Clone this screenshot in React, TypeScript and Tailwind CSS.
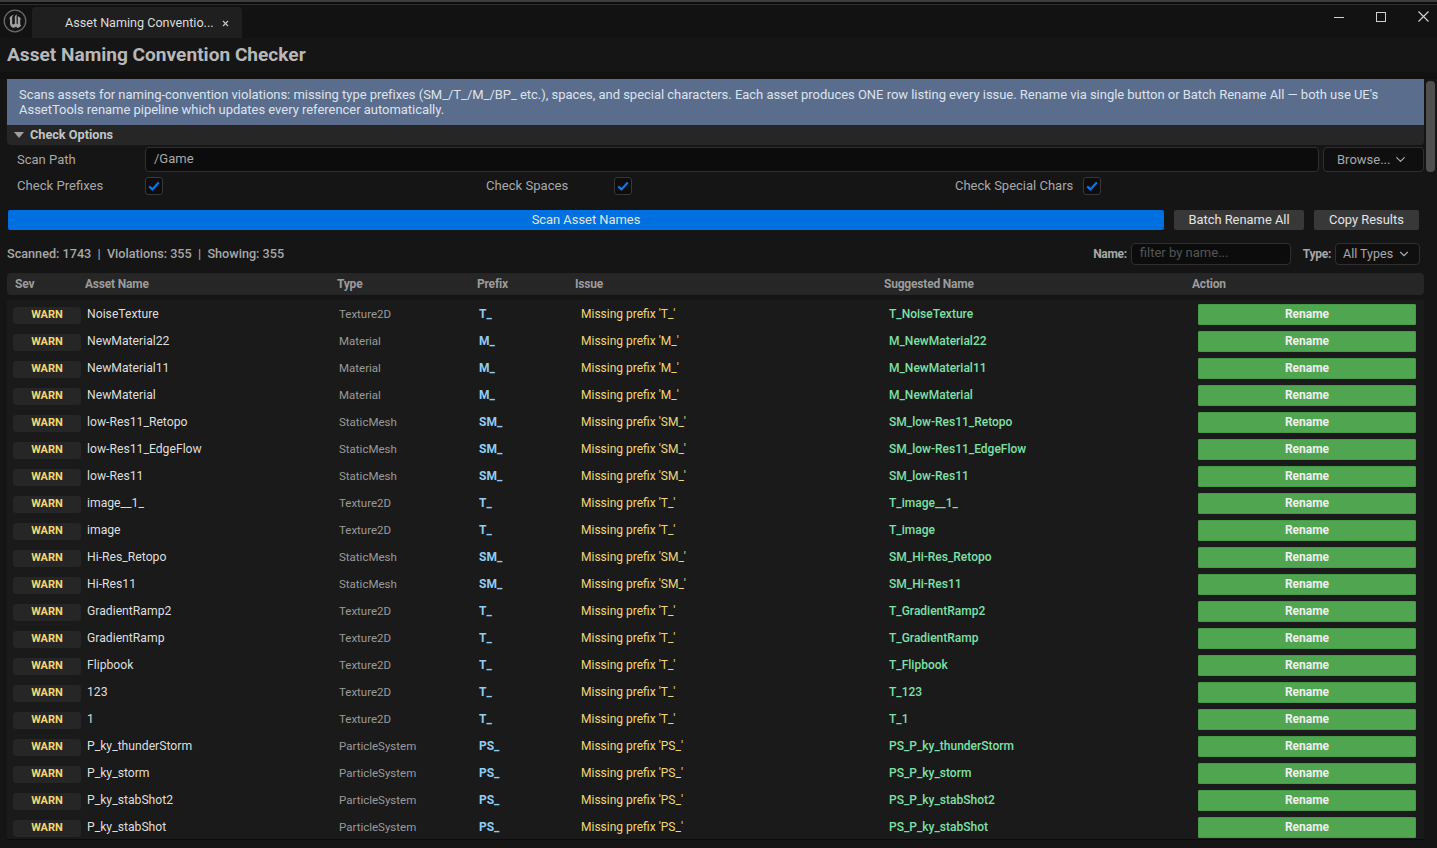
import React from "react";
import { ChevronDown, X } from "lucide-react";

const rows: [string, string, string][] = [
  ["NoiseTexture", "Texture2D", "T_"],
  ["NewMaterial22", "Material", "M_"],
  ["NewMaterial11", "Material", "M_"],
  ["NewMaterial", "Material", "M_"],
  ["low-Res11_Retopo", "StaticMesh", "SM_"],
  ["low-Res11_EdgeFlow", "StaticMesh", "SM_"],
  ["low-Res11", "StaticMesh", "SM_"],
  ["image__1_", "Texture2D", "T_"],
  ["image", "Texture2D", "T_"],
  ["Hi-Res_Retopo", "StaticMesh", "SM_"],
  ["Hi-Res11", "StaticMesh", "SM_"],
  ["GradientRamp2", "Texture2D", "T_"],
  ["GradientRamp", "Texture2D", "T_"],
  ["Flipbook", "Texture2D", "T_"],
  ["123", "Texture2D", "T_"],
  ["1", "Texture2D", "T_"],
  ["P_ky_thunderStorm", "ParticleSystem", "PS_"],
  ["P_ky_storm", "ParticleSystem", "PS_"],
  ["P_ky_stabShot2", "ParticleSystem", "PS_"],
  ["P_ky_stabShot", "ParticleSystem", "PS_"],
];

function Check() {
  return (
    <div className="w-[18px] h-[18px] rounded-[3px] border border-[#383838] bg-[#0d0d0d] flex items-center justify-center">
      <svg width="12" height="10" viewBox="0 0 12 10" fill="none">
        <path d="M1.2 5.4 L4.4 8.4 L10.8 1.4" stroke="#0a78e6" strokeWidth="2.2" />
      </svg>
    </div>
  );
}

function Logo() {
  return (
    <svg width="24" height="24" viewBox="0 0 24 24" fill="none">
      <circle cx="12" cy="12" r="10.8" stroke="#6a6a6a" strokeWidth="1.3" fill="#141414" />
      <path
        d="M5.8 10.5 C6.6 8 8.6 6.2 11.2 5.6 C9.8 6.6 9.2 7.6 9.2 8.8 L9.2 14.6 C9.2 15.8 10.6 15.9 11.8 14.8 L11.8 8 C11.8 7 12.6 6 14 5.2 C13.6 6.2 13.6 7 13.6 8 L13.6 14.6 L14.8 15.4 L14.8 7 C16.4 7.8 17.6 9 18.2 10.6 L17.2 10 L17.2 15.4 L18.2 16.4 C17 18 15.6 18.8 14.4 19 L13 17.4 C12 18.4 11 18.8 10.2 18.8 C8.4 18.2 7.2 16.8 7 15 L7 9.2 Z"
        fill="#a2a2a2"
      />
    </svg>
  );
}

export default function App() {
  return (
    <div className="w-[1437px] h-[848px] overflow-hidden flex flex-col bg-[#151515] font-['Roboto',sans-serif] text-[#c0c0c0]">
      <div className="h-[2px] bg-[#3d3d3d]" />
      <div className="h-[2px] bg-[#0c0c0c]" />
      <div className="h-[1px] bg-[#2e2e2e]" />
      <div className="h-[33px] flex bg-[#121212]">
        <div className="w-[32px] flex items-center pl-[3px] pb-[2px]">
          <Logo />
        </div>
        <div className="mt-[2px] w-[210px] rounded-t-[4px] bg-[#1f1f1f] flex items-center pl-[33px] pt-[1px] text-[12.6px] text-[#dcdcdc]">
          <span>Asset Naming Conventio...</span>
          <X size={9} strokeWidth={3} className="ml-[7px] text-[#c8c8c8]" />
        </div>
        <div className="flex-1" />
        <div className="flex items-start text-[#d0d0d0]">
          <svg width="10" height="1" viewBox="0 0 10 1" className="mt-[12px] mr-[32px]">
            <rect width="10" height="1" fill="currentColor" />
          </svg>
          <svg width="10" height="10" viewBox="0 0 10 10" fill="none" className="mt-[7px] mr-[32px]">
            <rect x="0.5" y="0.5" width="9" height="9" stroke="currentColor" />
          </svg>
          <svg width="11" height="11" viewBox="0 0 11 11" fill="none" className="mt-[6px] mr-[8px]">
            <path d="M0.5 0.5 L10.5 10.5 M10.5 0.5 L0.5 10.5" stroke="currentColor" strokeWidth="1.2" />
          </svg>
        </div>
      </div>
      <div className="h-[34px] bg-[#151515] pl-[7px] flex items-center text-[19.1px] font-bold text-[#b8b8b8]">
        Asset Naming Convention Checker
      </div>
      <div className="h-[7px] bg-[#111111]" />
      <div className="flex">
        <div className="ml-[7px] w-[1417px] flex flex-col">
          <div className="h-[46px] bg-[#5a6d8c] pl-[12px] pr-[20px] pt-[8px] text-[13px] tracking-[-0.03px] leading-[15px] text-[#dde3ee]">
            Scans assets for naming-convention violations: missing type prefixes (SM_/T_/M_/BP_ etc.), spaces, and special characters. Each asset produces ONE row listing every issue. Rename via single button or Batch Rename All — both use UE's AssetTools rename pipeline which updates every referencer automatically.
          </div>
          <div className="h-[20px] bg-[#262626] rounded-b-[4px] flex items-center pl-[7px] gap-[6px] text-[12.7px] font-bold text-[#c4c4c4]">
            <span className="w-0 h-0 border-l-[5px] border-r-[5px] border-t-[6px] border-l-transparent border-r-transparent border-t-[#a0a0a0]" />
            Check Options
          </div>
          <div className="h-[25px] mt-[2px] flex items-center text-[13px] pl-[10px]">
            <div className="w-[128px] text-[#a8a8a8]">Scan Path</div>
            <div className="w-[1174px] h-full rounded-[4px] border border-[#2f2f2f] bg-[#0c0c0c] pl-[8px] pb-[2px] flex items-center text-[#a8a8a8]">/Game</div>
            <div className="ml-[4px] w-[101px] h-full rounded-[4px] border border-[#2f2f2f] bg-[#0f0f0f] flex items-center pl-[13px] gap-[3px] text-[#a8a8a8]">
              Browse...
              <ChevronDown size={15} />
            </div>
          </div>
          <div className="h-[18px] mt-[5px] flex items-center text-[13.1px] pl-[10px] text-[#a8a8a8]">
            <div className="w-[128px]">Check Prefixes</div>
            <Check />
            <div className="w-[323px]" />
            <div className="w-[128px]">Check Spaces</div>
            <Check />
            <div className="w-[323px]" />
            <div className="w-[128px] whitespace-nowrap text-[13px]">Check Special Chars</div>
            <Check />
          </div>
          <div className="h-[20px] mt-[15px] flex text-[12.9px] text-[#e4e4e4]">
            <div className="ml-[1px] w-[1156px] rounded-[2px] bg-[#0070e0] flex items-center justify-center">Scan Asset Names</div>
            <div className="ml-[10px] w-[130px] rounded-[2px] bg-[#383838] flex items-center justify-center">Batch Rename All</div>
            <div className="ml-[10px] w-[105px] rounded-[2px] bg-[#383838] flex items-center justify-center">Copy Results</div>
          </div>
          <div className="h-[22px] mt-[13px] flex items-center text-[12.65px] font-medium text-[#a8a8a8]">
            <span className="whitespace-pre">Scanned: 1743  |  Violations: 355  |  Showing: 355</span>
            <div className="flex-1" />
            <span className="font-bold text-[12px] tracking-[-0.3px]">Name:</span>
            <div className="ml-[4px] w-[160px] h-full rounded-[4px] border border-[#2f2f2f] bg-[#0c0c0c] pl-[8px] pb-[2px] flex items-center text-[13px] font-normal text-[#555555]">filter by name...</div>
            <span className="ml-[12px] font-bold text-[12px] tracking-[-0.3px]">Type:</span>
            <div className="ml-[4px] w-[85px] h-full rounded-[4px] border border-[#2f2f2f] bg-[#0f0f0f] flex items-center pl-[7px] gap-[4px] text-[12.5px] font-normal">
              All Types
              <ChevronDown size={14} />
            </div>
            <div className="w-[4px]" />
          </div>
          <div className="mt-[8px] h-[22px] rounded-[4px] bg-[#262626] grid grid-cols-[70px_252px_140px_98px_309px_308px_240px] items-center pl-[8px] text-[12px] tracking-[-0.2px] font-bold text-[#9c9c9c]">
            <div>Sev</div>
            <div>Asset Name</div>
            <div>Type</div>
            <div>Prefix</div>
            <div>Issue</div>
            <div>Suggested Name</div>
            <div>Action</div>
          </div>
          <div className="mt-[5px] h-[540px] bg-[#1a1a1a] pl-[6px] pr-[8px] pt-[1px] overflow-hidden border-b border-b-[#0c0c0c]">
            {rows.map(([name, type, prefix]) => (
              <div key={name} className="h-[27px] grid grid-cols-[74px_252px_140px_102px_308px_309px_218px] items-center">
                <div className="mt-[2px] w-[68px] h-[17px] rounded-[3px] bg-[#262626] flex items-center justify-center text-[11px] font-bold text-[#f5d76e]">WARN</div>
                <div className="mb-[1px] text-[12.2px] text-[#dedede]">{name}</div>
                <div className="text-[11.5px] text-[#9a9a9a]">{type}</div>
                <div className="mb-[1px] text-[12px] font-bold text-[#90cdf4]">{prefix}</div>
                <div className="mb-[2px] text-[12px] text-[#f0d878]">Missing prefix '{prefix}'</div>
                <div className="mb-[2px] text-[12px] font-medium text-[#7fe0a8]">{prefix + name}</div>
                <div className="h-[21px] rounded-[1px] bg-[#50a650] border border-[#479a47] flex items-center justify-center pb-[2px] text-[12px] font-bold text-[#f0f0f0]">Rename</div>
              </div>
            ))}
          </div>
        </div>
        <div className="ml-[2px] mt-[2px] w-[9px] h-[91px] rounded-[4px] bg-[#4f4f4f]" />
      </div>
    </div>
  );
}
